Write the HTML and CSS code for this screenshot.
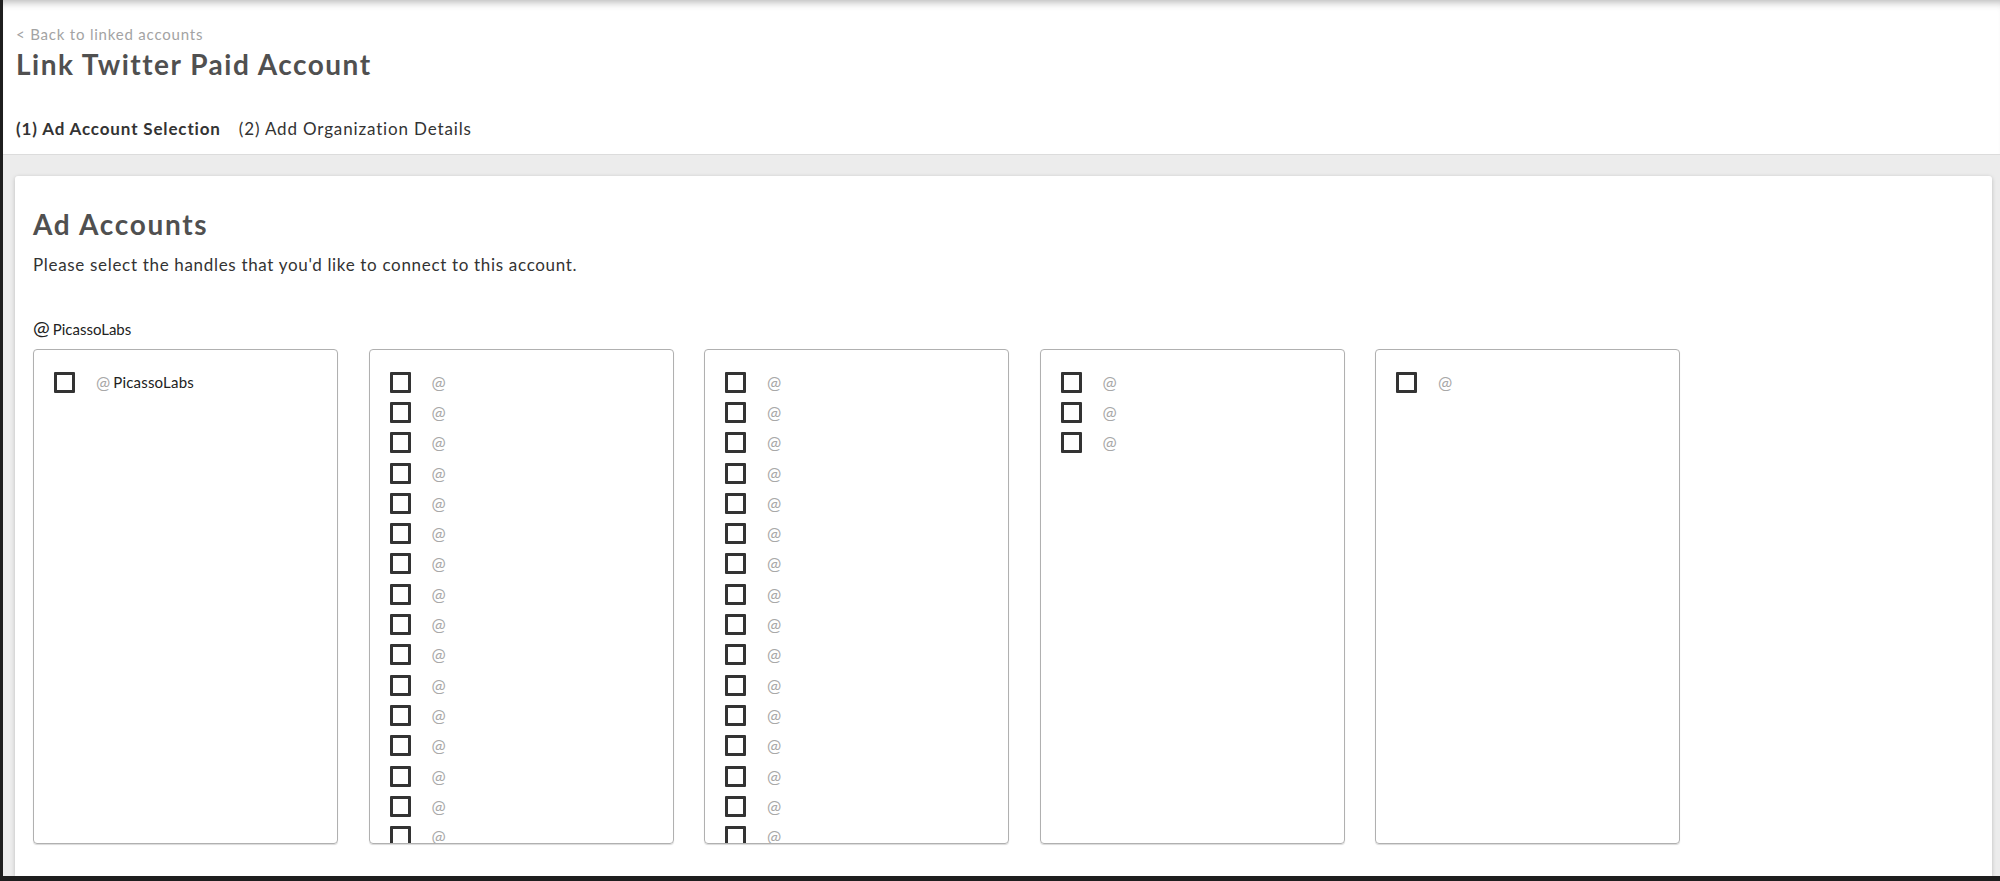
FILE: index.html
```html
<!DOCTYPE html>
<html lang="en">
    <head>
        <meta charset="UTF-8">
        <meta name="viewport" content="width=device-width, initial-scale=1.0">
        <title>Link Twitter Paid Account</title>
        <link rel="stylesheet" href="styles.css">
    </head>
    <body>
        <div class="page">
            <header class="page-header">
                <a class="back-link" href="#">&lt; Back to linked accounts</a>
                <h1>Link Twitter Paid Account</h1>
                <div class="steps">
                    <span class="step active">(1) Ad Account Selection</span>
                    <span class="step">(2) Add Organization Details</span>
                </div>
            </header>

            <main class="content">
                <section class="card">
                    <h2>Ad Accounts</h2>
                    <p class="hint">Please select the handles that you'd like to connect to this account.</p>

                    <div class="owner"><span class="owner-at">@</span>PicassoLabs</div>

                    <div class="handle-columns">
                        <ul class="handle-box">
                            <li><span class="check"></span><span class="at">@</span><span class="name">PicassoLabs</span></li>
                        </ul>
                        <ul class="handle-box">
                            <li><span class="check"></span><span class="at">@</span></li>
                            <li><span class="check"></span><span class="at">@</span></li>
                            <li><span class="check"></span><span class="at">@</span></li>
                            <li><span class="check"></span><span class="at">@</span></li>
                            <li><span class="check"></span><span class="at">@</span></li>
                            <li><span class="check"></span><span class="at">@</span></li>
                            <li><span class="check"></span><span class="at">@</span></li>
                            <li><span class="check"></span><span class="at">@</span></li>
                            <li><span class="check"></span><span class="at">@</span></li>
                            <li><span class="check"></span><span class="at">@</span></li>
                            <li><span class="check"></span><span class="at">@</span></li>
                            <li><span class="check"></span><span class="at">@</span></li>
                            <li><span class="check"></span><span class="at">@</span></li>
                            <li><span class="check"></span><span class="at">@</span></li>
                            <li><span class="check"></span><span class="at">@</span></li>
                            <li><span class="check"></span><span class="at">@</span></li>
                            <li><span class="check"></span><span class="at">@</span></li>
                            <li><span class="check"></span><span class="at">@</span></li>
                        </ul>
                        <ul class="handle-box">
                            <li><span class="check"></span><span class="at">@</span></li>
                            <li><span class="check"></span><span class="at">@</span></li>
                            <li><span class="check"></span><span class="at">@</span></li>
                            <li><span class="check"></span><span class="at">@</span></li>
                            <li><span class="check"></span><span class="at">@</span></li>
                            <li><span class="check"></span><span class="at">@</span></li>
                            <li><span class="check"></span><span class="at">@</span></li>
                            <li><span class="check"></span><span class="at">@</span></li>
                            <li><span class="check"></span><span class="at">@</span></li>
                            <li><span class="check"></span><span class="at">@</span></li>
                            <li><span class="check"></span><span class="at">@</span></li>
                            <li><span class="check"></span><span class="at">@</span></li>
                            <li><span class="check"></span><span class="at">@</span></li>
                            <li><span class="check"></span><span class="at">@</span></li>
                            <li><span class="check"></span><span class="at">@</span></li>
                            <li><span class="check"></span><span class="at">@</span></li>
                            <li><span class="check"></span><span class="at">@</span></li>
                            <li><span class="check"></span><span class="at">@</span></li>
                        </ul>
                        <ul class="handle-box">
                            <li><span class="check"></span><span class="at">@</span></li>
                            <li><span class="check"></span><span class="at">@</span></li>
                            <li><span class="check"></span><span class="at">@</span></li>
                        </ul>
                        <ul class="handle-box">
                            <li><span class="check"></span><span class="at">@</span></li>
                        </ul>
                    </div>
                </section>
            </main>
        </div>
    </body>
</html>
```

FILE: styles.css
```css
html, body {
    margin: 0;
    height: 100%;
}
body {
    font-family: Lato, "Open Sans", sans-serif;
    color: #333;
    background: #1e1e1e;
}
.page {
    box-sizing: border-box;
    height: 100%;
    display: flex;
    flex-direction: column;
    border-left: 3px solid #1e1e1e;
    border-bottom: 5px solid #1e1e1e;
    background: #ececec;
    overflow: hidden;
}
.page-header {
    box-sizing: border-box;
    flex: none;
    height: 155px;
    padding: 25px 13px 0;
    background: #fff;
    border-bottom: 1px solid #dcdcdc;
    box-shadow: inset 0 9px 9px -7px rgba(0, 0, 0, 0.3);
}
.back-link {
    display: block;
    font-size: 15px;
    line-height: 18px;
    letter-spacing: 0.8px;
    color: #a3a3a3;
    text-decoration: none;
}
h1 {
    margin: 4px 0 0;
    font-size: 28px;
    line-height: 34px;
    font-weight: 700;
    letter-spacing: 1.5px;
    color: #505050;
}
.steps {
    display: flex;
    gap: 18px;
    margin-top: 38px;
    font-size: 17px;
    line-height: 20px;
    letter-spacing: 0.85px;
    color: #333;
}
.step.active {
    font-weight: 700;
}
.content {
    flex: 1;
    display: flex;
    padding: 21px 8px 0 12px;
    min-height: 0;
}
.card {
    flex: 1;
    padding: 31px 18px 0;
    background: #fff;
    border-radius: 3px 3px 0 0;
    box-shadow: 0 1px 4px rgba(0, 0, 0, 0.2);
}
h2 {
    margin: 0;
    font-size: 28px;
    line-height: 34px;
    font-weight: 700;
    letter-spacing: 1.7px;
    color: #505050;
}
.hint {
    margin: 14px 0 0;
    font-size: 17px;
    line-height: 20px;
    letter-spacing: 0.68px;
    color: #333;
}
.owner {
    margin-top: 43px;
    font-size: 15px;
    line-height: 18px;
    color: #222;
}
.owner-at {
    font-size: 20px;
    line-height: 18px;
    margin-right: 3px;
}
.handle-columns {
    display: grid;
    grid-template-columns: repeat(5, 305px);
    column-gap: 30.5px;
    margin-top: 11px;
}
.handle-box {
    box-sizing: border-box;
    height: 495px;
    margin: 0;
    padding: 17px 10px 0 20px;
    list-style: none;
    border: 1px solid #b0b0b0;
    border-radius: 4px;
    box-shadow: 0 1px 1px rgba(0, 0, 0, 0.15);
    overflow: hidden;
}
.handle-box li {
    display: flex;
    align-items: center;
    height: 30.3px;
}
.check {
    box-sizing: border-box;
    flex: none;
    width: 21px;
    height: 21px;
    border: 3px solid #333;
    border-radius: 1px;
}
.at {
    margin-left: 21px;
    font-size: 17px;
    color: #a8a8a8;
}
.name {
    margin-left: 3px;
    font-size: 15px;
    letter-spacing: 0.2px;
    color: #222;
}
```
